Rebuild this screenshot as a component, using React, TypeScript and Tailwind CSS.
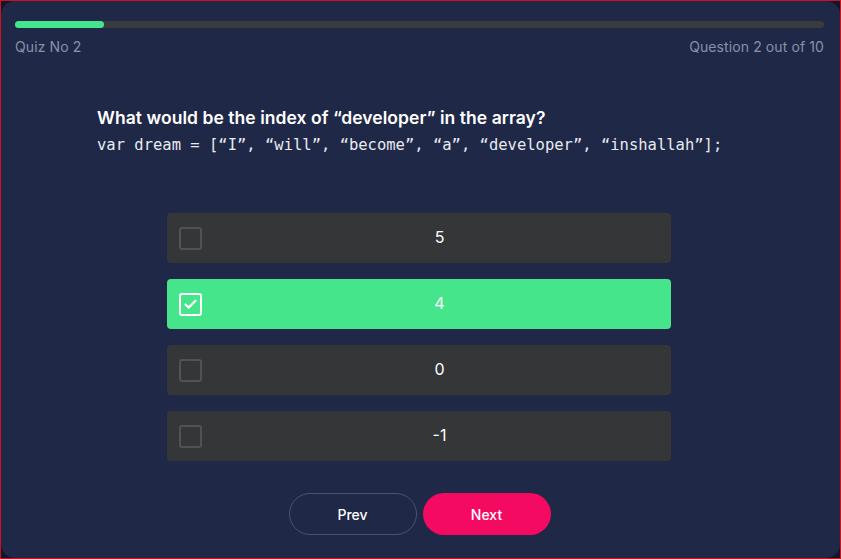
import { Check } from 'lucide-react';

const options = [
  { id: 'a', label: '5' },
  { id: 'b', label: '4' },
  { id: 'c', label: '0' },
  { id: 'd', label: '-1' },
];

export default function App() {
  const selected = 'b';

  return (
    <div
      className="w-[841px] h-[559px] border border-[#d0101c] bg-[#11162c]"
      style={{ fontFamily: 'Inter, "Noto Sans", sans-serif' }}
    >
      <div className="h-full rounded-[14px] bg-[#1f2847] pl-[14px] pr-[16px] pt-[20px]">
        {/* progress */}
        <div className="h-[7px] w-full rounded-full bg-[#383c3f]">
          <div className="h-full w-[89px] rounded-full bg-[#45e68b]" />
        </div>
        <div className="mt-[9px] flex justify-between text-[14px] leading-[20px] tracking-[0.1px] text-[#8a91a8]">
          <span>Quiz No 2</span>
          <span>Question 2 out of 10</span>
        </div>

        {/* question */}
        <div className="ml-[82px] mt-[49px]">
          <h2 className="text-[17.5px] font-semibold leading-[24px] tracking-[0.05px] text-white">
            What would be the index of “developer” in the array?
          </h2>
          <p
            className="mt-[3px] text-[15.5px] leading-[24px] text-[#e8eaf0]"
            style={{ fontFamily: '"DejaVu Sans Mono", monospace' }}
          >
            var dream = [“I”, “will”, “become”, “a”, “developer”, “inshallah”];
          </p>
        </div>

        {/* options */}
        <div className="ml-[152px] mt-[56px] flex w-[504px] flex-col gap-[16px]">
          {options.map((opt) => {
            const isSel = opt.id === selected;
            return (
              <div
                key={opt.id}
                className={`flex h-[50px] items-center rounded-[4px] pl-[12px] ${
                  isSel ? 'bg-[#45e68b]' : 'bg-[#343638]'
                }`}
              >
                <div
                  className={`flex h-[23px] w-[23px] items-center justify-center rounded-[3px] border-2 ${
                    isSel ? 'border-white' : 'border-[#505254]'
                  }`}
                >
                  {isSel && <Check className="h-[15px] w-[15px] text-white" strokeWidth={3.5} />}
                </div>
                <div className="ml-[6px] flex-1 pb-[3px] text-center text-[16px] text-white">{opt.label}</div>
              </div>
            );
          })}
        </div>

        {/* nav */}
        <div className="mt-[32px] flex justify-center gap-[6px]">
          <button className="h-[42px] w-[128px] rounded-full border border-[#4a5270] text-[14px] font-medium text-white">
            Prev
          </button>
          <button className="h-[42px] w-[128px] rounded-full bg-[#f50a62] text-[14px] font-medium text-white">
            Next
          </button>
        </div>
      </div>
    </div>
  );
}
